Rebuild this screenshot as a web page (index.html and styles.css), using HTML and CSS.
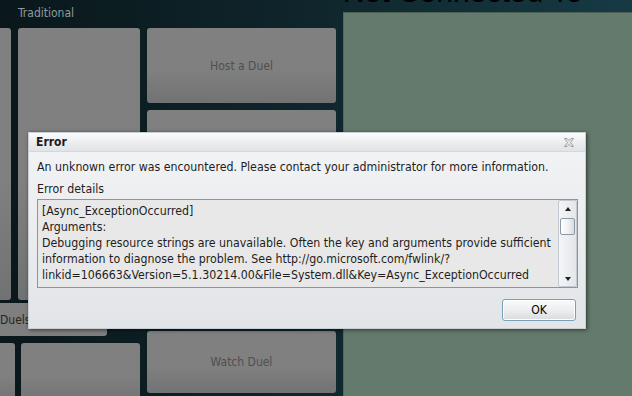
FILE: index.html
```html
<!DOCTYPE html>
<html lang="en">
<head>
<meta charset="UTF-8">
<title>Duel Lobby - Error</title>
<link rel="stylesheet" href="styles.css">
</head>
<body>
<div class="screen">
  <div class="left">
    <div class="section-label">Traditional</div>
    <div class="tiles">
      <div class="tile-col">
        <div class="tile-row top-row">
          <div class="tile tile-a"></div>
          <div class="tile tile-b"></div>
        </div>
        <div class="tile tile-wide">Duels</div>
        <div class="tile-row bottom-row">
          <div class="tile tile-c"></div>
          <div class="tile tile-d"></div>
        </div>
      </div>
      <div class="tile-col actions">
        <div class="tile host">Host a Duel</div>
        <div class="tile mid-1"></div>
        <div class="tile mid-2"></div>
        <div class="tile watch">Watch Duel</div>
      </div>
    </div>
  </div>
  <div class="right">
    <div class="page-title">Not Connected To</div>
    <div class="panel"></div>
  </div>
</div>

<div class="dialog">
  <div class="dialog-title">
    <span>Error</span>
    <svg class="close-icon" width="10" height="9" viewBox="0 0 10 9">
      <path d="M0.5 0.5 H3 L5 2.5 L7 0.5 H9.5 L6.5 4.5 L9.5 8.5 H7 L5 6.5 L3 8.5 H0.5 L3.5 4.5 Z" fill="#e4e6e8" stroke="#9a9fa4" stroke-width="1"/>
    </svg>
  </div>
  <div class="dialog-body">
    <div class="message">An unknown error was encountered. Please contact your administrator for more information.</div>
    <div class="details-label">Error details</div>
    <div class="details">
      <div class="details-text">
        [Async_ExceptionOccurred]<br>
        Arguments:<br>
        Debugging resource strings are unavailable. Often the key and arguments provide sufficient<br>
        information to diagnose the problem. See http://go.microsoft.com/fwlink/?<br>
        linkid=106663&amp;Version=5.1.30214.00&amp;File=System.dll&amp;Key=Async_ExceptionOccurred
      </div>
      <div class="scrollbar">
        <div class="arrow up"></div>
        <div class="thumb"></div>
        <div class="arrow down"></div>
      </div>
    </div>
    <div class="dialog-buttons">
      <button class="ok-btn">OK</button>
    </div>
  </div>
</div>
</body>
</html>
```

FILE: styles.css
```css
body {
  margin: 0;
  width: 632px;
  height: 396px;
  overflow: hidden;
  background: linear-gradient(to right, #0a171b, #0f262c 50%, #163a44);
  font-family: "DejaVu Sans Condensed", "DejaVu Sans", sans-serif;
}
.screen {
  display: flex;
  height: 396px;
}
.left {
  width: 343px;
  flex-shrink: 0;
}
.section-label {
  height: 28px;
  line-height: 27px;
  padding-left: 18px;
  font-size: 12px;
  color: #8d9b9d;
}
.tiles {
  display: flex;
  gap: 7px;
}
.tile-col {
  display: flex;
  flex-direction: column;
  width: 140px;
}
.tile-row {
  display: flex;
}
.tile {
  background: linear-gradient(#808080 55%, #717273);
  border-radius: 3px;
  font-size: 12px;
  color: #4f4f4f;
  display: flex;
  align-items: center;
  justify-content: center;
}
.top-row {
  height: 272px;
  gap: 7px;
}
.tile-a {
  width: 111px;
  margin-left: -100px;
}
.tile-b {
  width: 122px;
}
.tile-wide {
  margin-top: 3px;
  height: 33px;
  width: 170px;
  margin-left: -63px;
  justify-content: flex-start;
  padding-left: 63px;
  box-sizing: border-box;
  color: #262626;
  background: #7f7f7f;
}
.bottom-row {
  margin-top: 7px;
  height: 60px;
  gap: 6px;
}
.tile-c {
  width: 115px;
  margin-left: -100px;
}
.tile-d {
  width: 119px;
}
.actions {
  width: 189px;
  gap: 7px;
}
.host {
  height: 75px;
}
.mid-1 {
  height: 107px;
}
.mid-2 {
  height: 100px;
}
.watch {
  height: 62px;
}
.right {
  flex: 1;
  display: flex;
  flex-direction: column;
}
.page-title {
  height: 20px;
  margin-top: -8px;
  line-height: 0;
  text-align: right;
  padding-right: 92px;
  white-space: nowrap;
  font-family: "Liberation Sans", sans-serif;
  font-size: 30px;
  color: #000;
}
.panel {
  flex: 1;
  background: #647a6c;
  border-top: 1px solid #4c5f55;
  border-left: 1px solid #55695d;
}

/* modal error dialog */
.dialog {
  position: absolute;
  left: 28px;
  top: 132px;
  width: 558px;
  height: 197px;
  box-sizing: border-box;
  border: 1px solid #c9ced3;
  box-shadow: 1px 1px 4px rgba(0, 0, 0, 0.55);
  display: flex;
  flex-direction: column;
}
.dialog-title {
  height: 18px;
  display: flex;
  align-items: center;
  justify-content: space-between;
  padding: 0 11px 0 7px;
  background: linear-gradient(#fbfbfc, #e9ecee 60%, #e1e4e7);
  border-bottom: 1px solid #d3d8dc;
  font-size: 12px;
  font-weight: bold;
  color: #1c1c1c;
}
.close-icon {
  display: block;
}
.dialog-body {
  flex: 1;
  padding: 7px 7px 0 8px;
  background: linear-gradient(#f1f2f4, #e2e5e8);
  font-size: 12.25px;
  color: #1e1e1e;
}
.message {
  line-height: 16px;
}
.details-label {
  margin-top: 6px;
  line-height: 16px;
}
.details {
  margin-top: 2px;
  height: 89px;
  box-sizing: border-box;
  border: 1px solid #8a959e;
  background: #e8e8e8;
  display: flex;
}
.details-text {
  flex: 1;
  padding: 3px 0 0 4px;
  line-height: 16px;
  white-space: nowrap;
  overflow: hidden;
}
.scrollbar {
  width: 19px;
  box-sizing: border-box;
  border: 1px solid #c2c9d0;
  border-radius: 2px;
  background: linear-gradient(to right, #f4f5f7, #e3e7ea);
  display: flex;
  flex-direction: column;
  align-items: center;
}
.arrow {
  width: 0;
  height: 0;
  border-left: 3px solid transparent;
  border-right: 3px solid transparent;
}
.arrow.up {
  margin-top: 6px;
  border-bottom: 4px solid #222;
}
.arrow.down {
  margin-top: auto;
  margin-bottom: 5px;
  border-top: 4px solid #222;
}
.thumb {
  margin-top: 7px;
  width: 15px;
  height: 17px;
  box-sizing: border-box;
  border: 1px solid #8d99a4;
  border-radius: 2px;
  background: linear-gradient(to right, #ffffff, #f1f2f4 50%, #d8dce0);
}
.dialog-buttons {
  display: flex;
  justify-content: flex-end;
  margin-top: 11px;
}
.ok-btn {
  width: 74px;
  height: 22px;
  margin-right: 2px;
  border: 1px solid #7aa0b5;
  border-radius: 3px;
  background: linear-gradient(#fbfbfb, #eceef0 50%, #d9dde0);
  box-shadow: inset 0 0 0 1px #ffffff;
  font-family: "DejaVu Sans Condensed", "DejaVu Sans", sans-serif;
  font-size: 12px;
  color: #000;
  padding: 0;
}
```
